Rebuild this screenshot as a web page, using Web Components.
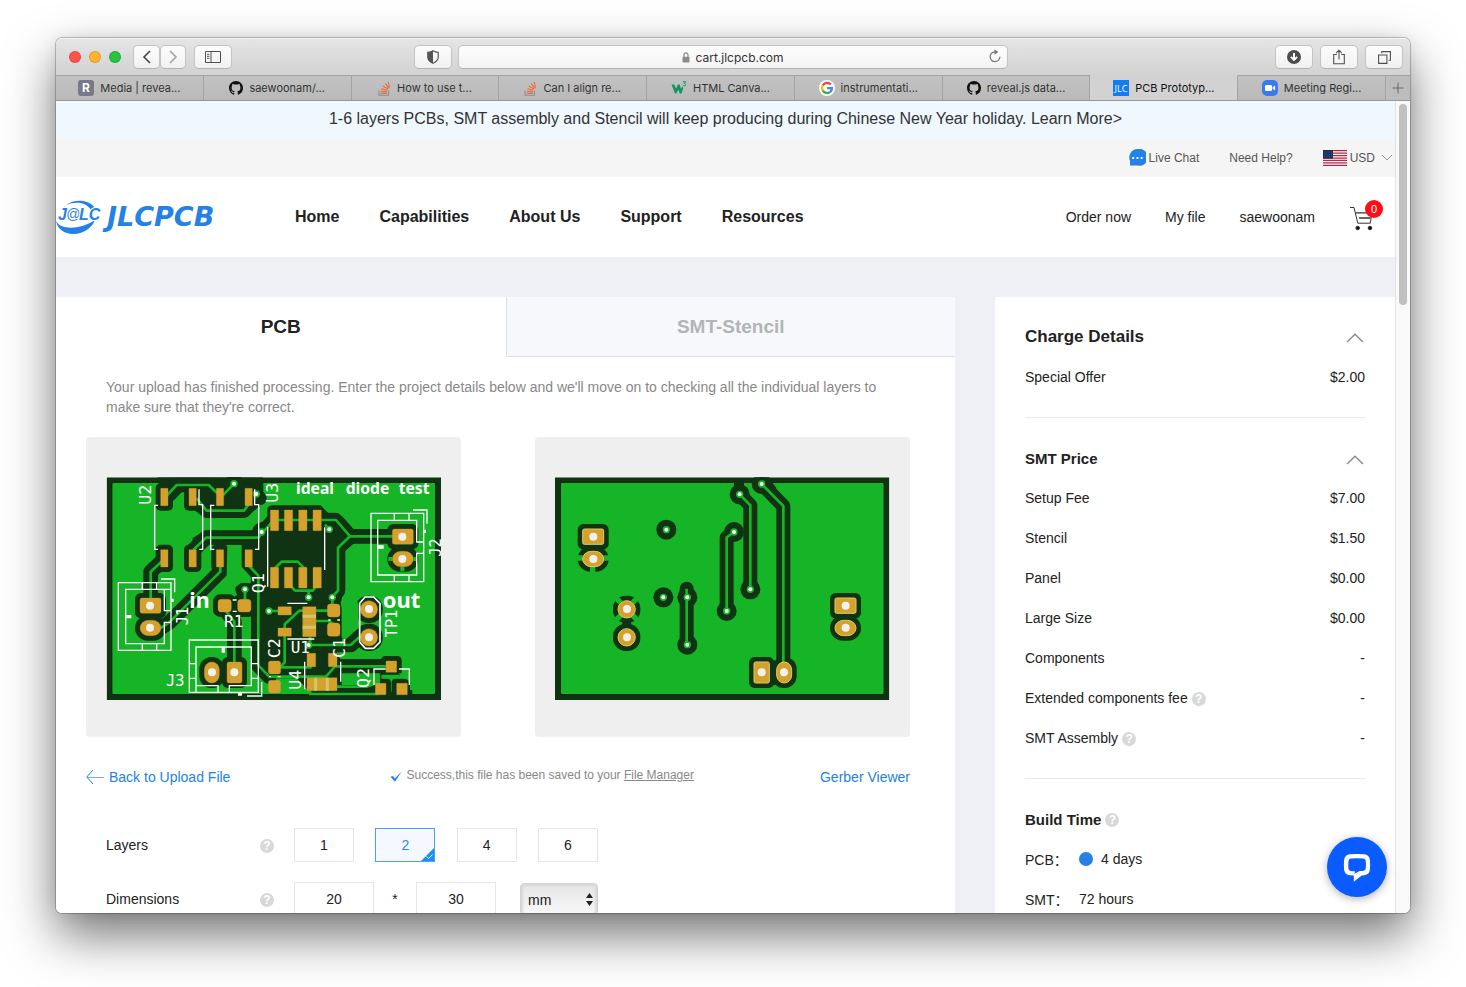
<!DOCTYPE html>
<html lang="en">
<head>
<meta charset="utf-8">
<title>PCB Prototype &amp; PCB Fabrication - JLCPCB</title>
<style>
  html, body { margin: 0; height: 100%; background: #fff; }
  body { font-family: "Liberation Sans", Arial, "Noto Sans CJK SC", sans-serif; font-size: 14px; color: #222; }
</style>
</head>
<body>
<app-desktop></app-desktop>
<script>
const BASE = `*{box-sizing:border-box} a{color:inherit;text-decoration:none} button{font:inherit;color:inherit;background:none;border:0;padding:0;margin:0} svg{display:block;flex:none}`;
function define(name, css, html, setup) {
  const t = document.createElement('template');
  customElements.define(name, class extends HTMLElement {
    constructor() {
      super();
      this.attachShadow({ mode: 'open' });
    }
    connectedCallback() {
      if (this.shadowRoot.childNodes.length) return;
      t.innerHTML = `<style>${BASE}${css}</style>${typeof html === 'function' ? html(this) : html}`;
      this.shadowRoot.append(t.content.cloneNode(true));
      if (setup) setup(this);
    }
  });
}

/* ---------- small icons ---------- */
const ICONS = {
  back: `<svg width="10" height="16" viewBox="0 0 10 16" fill="none" stroke="#444" stroke-width="1.6"><path d="M8 2 2 8l6 6"/></svg>`,
  forward: `<svg width="10" height="16" viewBox="0 0 10 16" fill="none" stroke="#a3a3a3" stroke-width="1.6"><path d="m2 2 6 6-6 6"/></svg>`,
  sidebar: `<svg width="16" height="12" viewBox="0 0 16 12" fill="none" stroke="#505050"><path d="M.5.5h15v11H.5zM6 .5v11M2 3.3h2.4M2 5.3h2.4M2 7.3h2.4"/></svg>`,
  shield: `<svg width="12" height="14" viewBox="0 0 12 14"><path d="M6 .7c1.5 1 3.3 1.5 5.2 1.6v5c0 2.700-2 4.700-5.200 6C2.800 12 .8 10 .8 7.300v-5C2.700 2.200 4.500 1.700 6 .7z" fill="none" stroke="#555" stroke-width="1.200"/><path d="M6 .7v12.600C2.800 12 .8 10 .8 7.300v-5C2.700 2.200 4.500 1.700 6 .7z" fill="#555"/></svg>`,
  lock: `<svg width="8" height="11" viewBox="0 0 8 11"><path d="M2 5V3a2 2.200 0 0 1 4 0v2" fill="none" stroke="#8b8b8b" stroke-width="1.200"/><rect x=".5" y="4.700" width="7" height="5.800" rx=".8" fill="#8b8b8b"/></svg>`,
  reload: `<svg width="12" height="14" viewBox="0 0 12 14"><path d="M7 3A4.900 4.900 0 1 0 10.900 7.800" fill="none" stroke="#777" stroke-width="1.200"/><path d="M5.500.3 9.300 3 5.500 5.800z" fill="#777"/></svg>`,
  download: `<svg width="14" height="14" viewBox="0 0 14 14"><circle cx="7" cy="7" r="7" fill="#4d4d4d"/><path d="M7 3v6.500M3.900 6.800 7 10l3.100-3.200" fill="none" stroke="#fff" stroke-width="1.900"/></svg>`,
  share: `<svg width="12" height="16" viewBox="0 0 12 16" fill="none" stroke="#505050" stroke-width="1.100"><path d="M3.800 5.500H.7v9.300h10.600V5.500H8.200M6 10.500V1.300M3.200 4 6 1.200 8.800 4"/></svg>`,
  overview: `<svg width="13" height="13" viewBox="0 0 13 13" fill="none" stroke="#505050" stroke-width="1.100"><path d="M.6 4h8.300v8.400H.6zM3.800 2.300V.6h8.600v8.600h-1.700"/></svg>`,
  R: `<svg width="16" height="16" viewBox="0 0 16 16"><rect width="16" height="16" rx="3" fill="#777986"/><text x="8" y="12.200" font-family="Inter,sans-serif" font-size="12" font-weight="700" fill="#fff" text-anchor="middle">R</text></svg>`,
  github: `<svg width="14" height="14" viewBox="0 0 16 16"><path fill="#111" d="M8 0C3.580 0 0 3.580 0 8c0 3.540 2.290 6.530 5.470 7.590.4.070.550-.170.550-.380 0-.190-.010-.820-.010-1.490-2.010.370-2.530-.490-2.690-.940-.090-.230-.480-.940-.820-1.130-.280-.150-.680-.520-.010-.530.630-.010 1.080.580 1.230.820.720 1.210 1.870.870 2.330.660.070-.520.280-.870.510-1.070-1.780-.200-3.640-.890-3.640-3.950 0-.870.310-1.590.820-2.150-.080-.200-.360-1.020.080-2.120 0 0 .670-.210 2.200.820.640-.180 1.320-.270 2-.270s1.360.090 2 .270c1.530-1.040 2.200-.820 2.200-.820.440 1.100.160 1.920.080 2.120.510.560.820 1.270.820 2.150 0 3.070-1.870 3.750-3.650 3.950.290.250.540.730.540 1.480 0 1.070-.010 1.930-.010 2.200 0 .210.150.460.550.380A8.010 8.010 0 0 0 16 8c0-4.420-3.580-8-8-8z"/></svg>`,
  so: `<svg width="13" height="15" viewBox="0 0 13 15" fill="none"><path d="M1 9.500v4.800h9.500V9.500" stroke="#8a8f94" stroke-width="1.100"/><path d="M2.700 12.400h6.200M2.800 10.200l6.100.7M3.400 7.700l5.800 1.700M4.800 5l5.200 3M7.300 2.700l3.700 4.600M10.300.800l1.100 5.700" stroke="#ee6c35" stroke-width="1.100"/></svg>`,
  w3: `<svg width="16" height="14" viewBox="0 0 16 14"><path d="M.5 3.500h2.800l1.700 4.200 1.900-4.200h1.800l1.200 4.200 1.300-2.200 1 1.700-1.600 5.200H8.900L7.200 8.700l-2 3.700H4z" fill="#12945f"/><path d="M12 .8h2.700L13.300 2.300c1.800.2 1.700 2.700 0 2.600-.7 0-1.200-.3-1.400-.8" fill="none" stroke="#12945f"/></svg>`,
  google: `<svg width="16" height="16" viewBox="0 0 16 16"><circle cx="8" cy="8" r="8" fill="#fff"/><g fill="none" stroke-width="2.300"><path d="M11.800 4.500A5 5 0 0 0 3.800 5.300" stroke="#ea4335"/><path d="M3.800 5.300a5 5 0 0 0 0 5.300" stroke="#fbbc05"/><path d="M3.800 10.600a5 5 0 0 0 7.500 1.300" stroke="#34a853"/><path d="M11.300 11.900A5 5 0 0 0 13 8.100H8.100" stroke="#4285f4"/></g></svg>`,
  jlc: `<svg width="16" height="16" viewBox="0 0 16 16"><rect width="16" height="16" fill="#137cf0"/><text x="8" y="12" text-anchor="middle" font-family="Open Sans,sans-serif" font-size="9" fill="#fff">JLC</text></svg>`,
  zoom: `<svg width="16" height="16" viewBox="0 0 16 16"><rect width="16" height="16" rx="5" fill="#3a7af0"/><rect x="3" y="5" width="7" height="6" rx="1.300" fill="#fff"/><path d="m10.500 7.500 2.600-2v5l-2.600-2z" fill="#fff"/></svg>`,
  livechat: `<svg width="17" height="17" viewBox="0 0 17 17"><path d="M8.500 0A8.500 8.500 0 1 1 8.500 16.600L1 16.600V12A8.500 8.500 0 0 1 8.500 0z" fill="#2681e6"/><path d="M3.200 8h1.900v1.900H3.200zM7.500 8h1.900v1.900H7.500zM11.700 8h1.900v1.900h-1.900z" fill="#fff"/></svg>`,
  flag: `<svg width="24" height="16" viewBox="0 0 24 16"><rect width="24" height="16" fill="#fff"/><path d="M0 .6h24M0 3.100h24M0 5.500h24M0 8h24M0 10.400h24M0 12.900h24M0 15.300h24" stroke="#b92240" stroke-width="1.250"/><rect width="10" height="8.600" fill="#1c2c5c"/><path d="M1 2h8M1 4.300h8M1 6.600h8" stroke="#71809e" stroke-width=".6" stroke-dasharray=".8 1"/></svg>`,
  down: `<svg width="12" height="7" viewBox="0 0 12 7" fill="none" stroke="#999"><path d="m1 1 5 5 5-5"/></svg>`,
  up: `<svg width="18" height="10" viewBox="0 0 18 10" fill="none" stroke="#8a8a8a" stroke-width="1.400"><path d="m1 9 8-7.700L17 9"/></svg>`,
  cart: `<svg width="26" height="25" viewBox="0 0 26 25" fill="none" stroke="#333"><path d="M1 1.500h4l3.800 15.700h12.500l1.700-11.400" /><path d="M6.800 6.800h16M10 12h11.500" stroke-width="1.300"/><circle cx="8.700" cy="22" r="1.800" fill="#111"/><circle cx="21" cy="22" r="1.800" fill="#111"/></svg>`,
  arrow: `<svg width="18" height="14" viewBox="0 0 18 14" fill="none" stroke="#2681e6"><path d="M7 0 .8 7 7 14" /><path d="M1 7.500h17" stroke-opacity=".65"/></svg>`,
  tick: `<svg width="12" height="11" viewBox="0 0 12 11"><path d="m.5 5.700 2.500-.7L4.800 7.500 11.700.500 5 10.700z" fill="#2681e6"/></svg>`,
  bubble: `<svg width="30" height="30" viewBox="0 0 30 30"><path fill="#fff" fill-rule="evenodd" d="M8 2.300q7-.7 14 0 5.500.5 5.900 5.700.5 4.900 0 9.500-.5 5-5.400 5.700l-2.800.3-7.900 6.200v-6.300l-3.800-.1q-5.300-.6-5.900-5.600-.5-4.900 0-9.700.5-5 5.900-5.700zM8.700 6.500q-2 .3-2.200 2.200-.5 4.200 0 8.300.2 1.700 2.200 2 1.500.200 4.300.2l-.4 2.500 5.100-2.600q2.300 0 3.900-.3 1.900-.3 2.100-2 .5-4.100 0-8.200-.2-1.800-2.200-2.100-6.400-.6-12.800 0z"/></svg>`
};
define('ui-icon', `:host{display:inline-flex;flex:none}`, el => ICONS[el.getAttribute('name')]);

define('help-icon', `:host{display:inline-flex;flex:none;padding-top:1px} button{width:14px;height:14px;border-radius:50%;background:#d8d8d8;color:#fff;font-size:12px;line-height:14px;font-weight:700;text-align:center}`,
  `<button type="button" aria-label="Help">?</button>`);

/* ---------- browser chrome ---------- */
define('tool-button', `:host{display:inline-flex} button{width:var(--w,38px);height:24px;display:grid;place-items:center;background:linear-gradient(#fdfdfd,#f1f1f1);border:1px solid #c3c3c3;border-bottom-color:#b2b2b2;border-radius:var(--r,5px)}`,
  el => `<button type="button" aria-label="${el.getAttribute('label')}"><slot></slot></button>`);

define('browser-toolbar', `
  :host{display:grid;grid-template-columns:1fr minmax(0,550px) 1fr;align-items:center;height:37px;background:linear-gradient(#e5e5e5,#d2d2d2);border-top:1px solid #f6f6f6}
  .lights{display:flex;gap:8px;margin-right:12px}
  .lights button{width:12px;height:12px;border-radius:50%;border:1px solid rgba(0,0,0,.12)}
  .group{display:flex;align-items:center}
  .left{padding-left:13px}
  .shield{margin-left:auto;margin-right:6px}
  .right{justify-content:flex-end;gap:7px;padding-right:7px}
  .url{display:grid;grid-template-columns:24px 1fr 24px;align-items:center;height:24px;background:linear-gradient(#fdfdfd,#f3f3f3);border:1px solid #c3c3c3;border-bottom-color:#b2b2b2;border-radius:5px;font:12px Inter,sans-serif;color:#333}
  .site{grid-column:2;display:flex;justify-content:center;align-items:center;gap:5px}
`, `<div class="group left">
    <div class="lights"><button type="button" aria-label="Close" style="background:#ff534d"></button><button type="button" aria-label="Minimise" style="background:#fdb32f"></button><button type="button" aria-label="Zoom" style="background:#28c33f"></button></div>
    <tool-button label="Back" style="--w:27px;--r:5px"><ui-icon name="back"></ui-icon></tool-button>
    <tool-button label="Forward" style="--w:26px;--r:5px"><ui-icon name="forward"></ui-icon></tool-button>
    <tool-button label="Sidebar" style="margin-left:8px"><ui-icon name="sidebar"></ui-icon></tool-button>
    <tool-button class="shield" label="Privacy report"><ui-icon name="shield"></ui-icon></tool-button>
  </div>
  <div class="url"><span class="site"><ui-icon name="lock"></ui-icon><span>cart.jlcpcb.com</span></span><button type="button" aria-label="Reload"><ui-icon name="reload"></ui-icon></button></div>
  <div class="group right">
    <tool-button label="Downloads"><ui-icon name="download"></ui-icon></tool-button>
    <tool-button label="Share"><ui-icon name="share"></ui-icon></tool-button>
    <tool-button label="Tab overview"><ui-icon name="overview"></ui-icon></tool-button>
  </div>`);

define('browser-tab', `
  :host{flex:1;min-width:0;background:linear-gradient(#c2c2c2,#b9b9b9);border-right:1px solid #a3a3a3;border-top:1px solid #a3a3a3;display:flex}
  :host([active]){background:#d2d2d2;border-top-color:#d2d2d2;color:#111}
  a{flex:1;display:flex;align-items:center;justify-content:center;gap:6px;white-space:nowrap}
`, el => `<a href="#"><ui-icon name="${el.getAttribute('icon')}"></ui-icon><span><slot></slot></span></a>`);

define('browser-tabs', `
  :host{display:flex;height:26px;background:#bdbdbd;border-bottom:1px solid #999;font:11px Inter,sans-serif;color:#333}
  .new{width:24px;border-top:1px solid #a3a3a3;display:grid;place-items:center}
`, `<browser-tab icon="R">Media | revea...</browser-tab><browser-tab icon="github">saewoonam/...</browser-tab><browser-tab icon="so">How to use t...</browser-tab><browser-tab icon="so">Can I align re...</browser-tab><browser-tab icon="w3">HTML Canva...</browser-tab><browser-tab icon="google">instrumentati...</browser-tab><browser-tab icon="github">reveal.js data...</browser-tab><browser-tab icon="jlc" active>PCB Prototyp...</browser-tab><browser-tab icon="zoom">Meeting Regi...</browser-tab>
  <button class="new" type="button" aria-label="New tab"><svg width="12" height="12" viewBox="0 0 12 12" stroke="#666"><path d="M6 .5v11M.5 6h11"/></svg></button>`);

/* ---------- site header ---------- */
define('site-logo', `:host{display:block}`, `<a href="#" aria-label="JLCPCB"><svg width="160" height="34" viewBox="0 0 160 34">
  <path d="M10 5C18-1 33-1 39 8l-4 2C30 2 20 1 10 5z" fill="#2681e6"/>
  <path d="M0 21c5 10 26 8 39-1-7 18-36 19-39 1z" fill="#2681e6"/>
  <g font-family="Liberation Sans,sans-serif" font-weight="700" font-style="italic" font-size="16" fill="#2681e6" stroke="#fff" stroke-width="2" paint-order="stroke"><text x="2" y="20">J</text><text x="10" y="19" font-size="14" font-weight="400">@</text><text x="23" y="20">LC</text></g>
  <text x="51" y="26" font-family="DejaVu Sans,sans-serif" font-weight="700" font-style="italic" font-size="27" fill="#2681e6">JLCPCB</text></svg></a>`);

define('site-header', `
  :host{display:block}
  .banner{height:37px;line-height:36px;background:#eff7ff;text-align:center;font-size:16px;color:#333;white-space:nowrap}
  .util{height:39px;background:#f5f5f5;display:flex;align-items:center;justify-content:flex-end;gap:30px;padding-right:2px;font-size:12px;color:#555}
  .util a,.util button{display:flex;align-items:center;gap:3px}
  .util ui-icon[name=down]{margin-left:3px}
  .bar{height:80px;background:#fff;display:flex;align-items:center;padding-right:20px}
  nav{display:flex;gap:40px;margin-left:79px;font-size:16px;font-weight:700;color:#222}
  .user{margin-left:auto;display:flex;align-items:center;gap:34px}
  .cart{position:relative;margin-top:6px}
  .count{position:absolute;left:16px;top:-6px;width:18px;height:18px;line-height:18px;border-radius:50%;background:#ff0d16;color:#fff;font-size:11px;text-align:center}
`, `<div class="banner"><a href="#">1-6 layers PCBs, SMT assembly and Stencil will keep producing during Chinese New Year holiday. Learn More&gt;</a></div>
  <div class="util"><a href="#"><ui-icon name="livechat"></ui-icon>Live Chat</a><a href="#">Need Help?</a><button type="button"><ui-icon name="flag"></ui-icon>USD<ui-icon name="down"></ui-icon></button></div>
  <div class="bar"><site-logo></site-logo>
    <nav><a href="#">Home</a><a href="#">Capabilities</a><a href="#">About Us</a><a href="#">Support</a><a href="#">Resources</a></nav>
    <div class="user"><a href="#">Order now</a><a href="#">My file</a><a href="#">saewoonam</a><a class="cart" href="#" aria-label="Cart"><ui-icon name="cart"></ui-icon><span class="count">0</span></a></div>
  </div>`);

/* ---------- board renderings ---------- */
const DARK = '#0f3313', GREEN = '#16b527', GOLD = '#d6a02c', HOLE = '#f2f1ef';
const r = (x, y, w, h, rx = 1) => ({ x, y, w, h, rx });
const rects = (list, grow, fill, extra = 0) => list.map(p => `<rect x="${p.x - grow}" y="${p.y - grow}" width="${p.w + 2 * grow}" height="${p.h + 2 * grow}" rx="${p.rx + extra}" fill="${fill}"/>`).join('');
const dots = (list, rad, fill) => list.map(([x, y]) => `<circle cx="${x}" cy="${y}" r="${rad}" fill="${fill}"/>`).join('');

const top_ = {
  pads: [r(242,175,22,52), r(327,175,22,52), r(409,175,22,52), r(495,175,22,52), r(242,359,22,52), r(327,359,22,52), r(409,359,22,52), r(495,359,22,52)],
  inner: [r(571,240,25,62), r(613,240,25,62), r(656,240,25,62), r(699,240,25,62), r(571,412,25,62), r(613,412,25,62), r(656,412,25,62), r(699,412,25,62),
    r(594,530,40,25), r(594,594,40,25), r(668,530,40,90), r(742,522,38,39,9), r(742,579,38,40,9), r(565,693,37,39,7), r(565,751,37,38,7), r(681,670,26,40), r(745,670,26,40), r(681,743,90,39)],
  round: [r(180,504,63,46,6), r(180,571,63,46,26), r(414,508,40,38,10), r(473,508,40,38,10), r(937,297,63,46,6), r(937,364,63,46,26), r(841,512,52,52,26), r(841,596,52,52,26), r(373,696,45,63,24), r(441,696,45,63,6), r(918,693,32,34), r(886,760,32,34), r(950,760,32,34)],
  holes: [[210,527],[210,593],[967,320],[967,387],[867,537],[867,622],[396,727],[463,727]],
  vias: [[462,161],[529,192],[545,306],[748,298],[686,502],[757,502],[495,478],[567,543],[686,645]],
  tracks: 'M262 195 290 165H386L412 190M425 200 462 161M350 205 380 242H492L505 225M340 360 378 323H535L580 272M724 270H768L810 319H967M810 319 774 353V482L757 500M250 390 212 425V520M421 400V425L268 577 245 592H210M505 395V405L535 437V706L568 740M495 478V520M435 540 463 575V720M690 645H812L845 615M765 709H935',
  innerTracks: 'M585 270H720M735 284 748 298M585 425V414L605 395H653L672 414V430M625 460 645 482H698L712 466M686 482V502M757 500V535M567 543H610M614 598V583L658 542H755M690 573H745L765 585M614 610V697L600 712H692V700M565 740H738L765 709M690 620V645M590 770H660M690 780V792H895M770 770H860L882 762'
};
const topBoard = `
  <clipPath id="edge"><rect x="80" y="142" width="1003" height="668"/></clipPath><g clip-path="url(#edge)">
  <rect x="80" y="142" width="1003" height="668" fill="${DARK}"/><rect x="97" y="159" width="968" height="633" rx="4" fill="${GREEN}"/>
  <path d="M97 157H1065M95 159V792M97 794H1065M1067 159V792" stroke="#0a240c" stroke-width="2"/>
  <g fill="${DARK}"><path d="M232 142H548L556 190 545 222 500 262H372L326 228V186H306L280 212 240 180z"/>
  <path d="M540 285 562 265V235Q565 226 580 226H722L745 250H770L822 300V340L795 362V485L780 510 785 535V640L770 668 783 690H905V785H980V792H695L650 745H560L515 708V420L488 408V350L540 340z"/>
  <path d="M338 350V324L375 302H530L545 275V350H470L455 345H385L350 380z"/></g>
  <path d="M${top_.tracks.slice(1)}" fill="none" stroke="${DARK}" stroke-width="44" stroke-linejoin="round" stroke-linecap="round"/>
  ${rects(top_.pads, 15, DARK, 14)}${rects(top_.round, 15, DARK, 12)}${dots(top_.vias, 29, DARK)}
  <g fill="${GREEN}"><path d="M442 345H485V410L512 440V460H482L455 480 440 440zM780 648 812 612 835 595V520L795 480V605zM785 730H900V765H785zM955 730H1055V780H990V755zM604 762H668V788H612z"/><path d="M550 159H1065V240H830V297L772 247H745L730 224H585L550 200z"/></g>
  <path d="M495 478 495 520M529 192 540 205" stroke="${DARK}" stroke-width="40" stroke-linecap="round"/>
  <path d="M${top_.tracks.slice(1)}${top_.innerTracks}" fill="none" stroke="${GREEN}" stroke-width="8" stroke-linejoin="round"/>
  <path d="M925 387H937M1000 387H1012M967 410V424M905 740H1000" stroke="${GREEN}" stroke-width="12"/>
  ${dots(top_.vias, 11, GREEN)}${dots(top_.vias, 6, '#fff')}
  <g stroke="#b59a3c" stroke-width="1">${rects([...top_.pads, ...top_.inner, ...top_.round], 0, GOLD)}</g>
  <path d="M668 559H708M668 592H708M707 743V782M742 743V782" stroke="#d1c66c" stroke-width="9"/>${dots(top_.holes, 12, HOLE)}
  </g>
  <g fill="none" stroke="#fff" stroke-width="4">
    <path d="M234 226H224V358H234M357 178V224H368V358H358M403 226H392V358H403M524 178V224H536V358H525M563 292V470M734 292V420"/>
    <path d="M115 458H273V661H115zM273 478H137V641H253V577H273M187 458V478M230 458V478M187 641V661M230 641V661M243 447H284V487M253 478V542H273"/>
    <path d="M873 250H1031V455H873zM1031 336H1010V271H893V435H1010V370H1031M943 250V271M987 250V271M943 435V455M987 435V455M999 240H1041V281"/>
    <path d="M328 630H535V787H328zM348 787V651H514V767H448V787M414 787V767H348M328 701H348M328 745H348M514 701H535M514 745H535M545 756V798H501"/>
    <path d="M622 520H682M622 627H703M458 510H470M458 544H470M745 570H752M772 570H780M567 740H573M593 740H602M674 695V778M782 695V755M882 765V717H917M957 717H988V765"/>
    <path d="M855 501H881L900 520V636L881 655H856L839 636V520z" stroke-width="5"/>
  </g>
  <path d="M137 560H154M893 351H911M430 651V668M273 511H281M1031 304H1038M474 792H486" stroke="#fff" stroke-width="10"/>
  <g fill="#fff" font-family="DejaVu Sans Mono,monospace" font-size="44">
    <g font-weight="700" font-family="Noto Sans,sans-serif"><text x="648" y="192" font-size="47">ideal</text><text x="797" y="192" font-size="47">diode</text><text x="956" y="192" font-size="47">test</text><text x="328" y="534" font-size="64">in</text><text x="908" y="534" font-size="66">out</text></g>
    <text x="432" y="591" font-size="48">R1</text><text x="632" y="668" font-size="48">U1</text><text x="258" y="769" font-size="46">J3</text>
    <text transform="translate(212 224) rotate(-90)" font-size="50">U2</text><text transform="translate(593 218) rotate(-90)" font-size="50">U3</text>
    <text transform="translate(551 490) rotate(-90)" font-size="50">Q1</text><text transform="translate(325 586) rotate(-90)" font-size="46">J1</text>
    <text transform="translate(1082 380) rotate(-90)" font-size="46">J2</text><text transform="translate(952 622) rotate(-90)" font-size="46">TP1</text>
    <text transform="translate(599 685) rotate(-90)" font-size="50">C2</text><text transform="translate(795 684) rotate(-90)" font-size="50">C1</text>
    <text transform="translate(664 779) rotate(-90)" font-size="50">U4</text><text transform="translate(868 774) rotate(-90)" font-size="50">Q2</text>
  </g>`;

const bot = {
  pads: [r(158,297,63,46,5), r(915,504,63,46,5), r(672,696,46,63,5)],
  ovals: [r(158,364,63,46,26), r(915,571,63,46,26), r(740,696,45,63,24), r(264,512,52,52,26), r(264,596,52,52,26)],
  holes: [[190,320],[190,387],[947,527],[947,593],[695,727],[762,727],[291,537],[291,622]],
  vias: [[629,193],[695,162],[409,299],[612,306],[400,502],[472,502],[661,478],[590,543],[472,644]],
  tracks: 'M629 193 661 226V478M695 162 760 228V710M612 306 590 322V543M470 476V644'
};
const bottomBoard = `
  <clipPath id="edge"><rect x="75" y="142" width="1003" height="668"/></clipPath><g clip-path="url(#edge)">
  <rect x="75" y="142" width="1003" height="668" fill="${DARK}"/><rect x="93" y="159" width="968" height="633" rx="4" fill="${GREEN}"/>
  <path d="M93 157H1061M91 159V792M93 794H1061M1063 159V792" stroke="#0a240c" stroke-width="2"/>
  <path d="M612 155H642V195H612zM668 155H725L740 175H690zM165 335H215V375H165zM920 535H975V590H920zM718 705 735 690V765H718zM277 570H303V600H277z" fill="${DARK}"/>
  <path d="${bot.tracks}" fill="none" stroke="${DARK}" stroke-width="42" stroke-linecap="round" stroke-linejoin="round"/>
  ${rects([...bot.pads, ...bot.ovals], 15, DARK, 12)}${dots(bot.vias, 30, DARK)}
  <path d="M140 384H158M221 384H238M188 410V428M258 504 272 518M322 504 308 518M258 570 272 556M322 570 308 556" stroke="${GREEN}" stroke-width="16"/>
  <path d="${bot.tracks}" fill="none" stroke="${GREEN}" stroke-width="8"/>
  ${dots(bot.vias, 11, GREEN)}${dots(bot.vias, 6, '#fff')}
  <g stroke="#d5cf69" stroke-width="3">${rects([...bot.pads, ...bot.ovals], 0, GOLD)}</g>${dots(bot.holes, 12, HOLE)}</g>`;

define('board-view', `:host{display:block;flex:0 1 375px} svg{width:100%;height:auto;background:#efefef;border-radius:4px}`,
  el => el.getAttribute('side') === 'top'
    ? `<svg viewBox="18 21 1125 900" role="img" aria-label="Top side">${topBoard}</svg>`
    : `<svg viewBox="15 21 1125 900" role="img" aria-label="Bottom side">${bottomBoard}</svg>`);

/* ---------- order form ---------- */
define('form-row', `
  :host{display:grid;grid-template-columns:154px 34px 304px;align-items:center;height:34px;margin-bottom:20px}
`, `<slot name="label"></slot><help-icon></help-icon><slot></slot>`);

define('layer-picker', `
  :host{display:flex;justify-content:space-between}
  label{position:relative;width:60px;height:34px;line-height:32px;border:1px solid #e6e6e6;text-align:center;background:#fff}
  input{appearance:none;position:absolute;inset:0;margin:0}
  label:has(:checked){border-color:#4a9ff5;background:#f5f9ff;color:#1890ff}
  svg{position:absolute;right:0;bottom:0;display:none}
  label:has(:checked) svg{display:block}
`, [1, 2, 4, 6].map(n => `<label><input type="radio" name="layers" value="${n}"${n === 2 ? ' checked' : ''}>${n}<svg width="13" height="13" viewBox="0 0 13 13"><path d="M13 0v13H0z" fill="#1890ff"/><path d="m5.500 8.500 2 2 4-4" fill="none" stroke="#fff"/></svg></label>`).join(''));

define('size-fields', `
  :host{display:grid;grid-template-columns:80px 42px 80px 24px 78px;text-align:center;align-items:center}
  input{width:100%;height:34px;border:1px solid #e6e6e6;text-align:center;font:inherit;color:#222;padding:0;background:#fff}
  .unit{grid-column:5;position:relative}
  select{display:block;appearance:none;width:100%;height:32px;border:1px solid #d3d3d3;border-radius:4px;box-shadow:inset 2px 2px 2px #d9d9d9,inset -2px 0 2px #d9d9d9;background:linear-gradient(#e5e5e5,#f8f8f8);font:inherit;color:#222;padding:1px 7px 0}
  svg{position:absolute;right:5px;top:10px;pointer-events:none}
`, `<input aria-label="Width" value="20"><span>*</span><input aria-label="Height" value="30">
  <div class="unit"><select aria-label="Unit"><option>mm</option><option>inch</option></select><svg width="7" height="13" viewBox="0 0 7 13"><path d="M3.500 0 7 5H0zM0 8h7l-3.500 5z" fill="#222"/></svg></div>`);

define('order-panel', `
  :host{display:block;background:#fff;flex:1;min-width:0}
  .tabs{display:grid;grid-template-columns:1fr 1fr;height:60px;font-size:19px;font-weight:700}
  .tabs button{color:#222}
  .tabs button+button{background:#f7f8fb;color:#b2b4b8;border-left:1px solid #d8e0e8;border-bottom:1px solid #d8e0e8}
  p{margin:20px 50px;line-height:20px;color:#888;}
  .boards,.links{display:flex;justify-content:space-between;margin:0 45px 0 30px}
  .links{align-items:center;height:20px;margin-top:30px;margin-bottom:41px;color:#2681e6}
  .links>*{display:flex;align-items:center;gap:5px}
  .links .saved{font-size:12px;color:#888;gap:4px;margin-bottom:4px;padding-left:34px}
  .saved a{text-decoration:underline}
  .saved ui-icon{padding-top:2px}
  form{margin:0 50px}
`, `<div class="tabs" role="tablist"><button type="button" role="tab">PCB</button><button type="button" role="tab">SMT-Stencil</button></div>
  <p>Your upload has finished processing. Enter the project details below and we'll move on to checking all the individual layers to make sure that they're correct.</p>
  <div class="boards"><board-view side="top"></board-view><board-view side="bottom"></board-view></div>
  <div class="links"><a href="#"><ui-icon name="arrow"></ui-icon>Back to Upload File</a>
    <span class="saved"><ui-icon name="tick"></ui-icon><span>Success,this file has been saved to your <a href="#">File Manager</a></span></span>
    <a href="#">Gerber Viewer</a></div>
  <form><form-row><span slot="label">Layers</span><layer-picker></layer-picker></form-row><form-row><span slot="label">Dimensions</span><size-fields></size-fields></form-row></form>`);

/* ---------- charges ---------- */
define('charge-row', `:host{display:flex;align-items:center;gap:4px;height:40px} .value{margin-left:auto}`,
  el => `<span><slot></slot></span>${el.hasAttribute('help') ? '<help-icon></help-icon>' : ''}<span class="value">${el.getAttribute('value')}</span>`);
define('charge-title', `:host{display:flex;align-items:center;height:40px;font-size:15px;font-weight:700;gap:4px} :host([main]){font-size:17px} button{margin-left:auto;margin-right:1px;padding-top:2px}`,
  el => `<span><slot></slot></span>${el.hasAttribute('help') ? '<help-icon></help-icon>' : '<button type="button" aria-label="Collapse"><ui-icon name="up"></ui-icon></button>'}`);
define('time-row', `:host{display:grid;grid-template-columns:54px 1fr;align-items:center;height:40px} .v{display:flex;align-items:center;gap:8px} :host([dot]) .v::before{content:"";width:14px;height:14px;border-radius:50%;background:#2681e6}`,
  el => `<span>${el.getAttribute('name')}</span><span class="v"><slot></slot></span>`);
define('charge-panel', `
  :host{display:block;flex:0 0 400px;background:#fff;padding:20px 30px 0}
  section{padding-bottom:20px;margin-bottom:20px;border-bottom:1px solid #ebebeb}
  section:last-child{border:0}
`, `<section><charge-title main>Charge Details</charge-title><charge-row value="$2.00">Special Offer</charge-row></section>
  <section><charge-title>SMT Price</charge-title><charge-row value="$7.00">Setup Fee</charge-row><charge-row value="$1.50">Stencil</charge-row><charge-row value="$0.00">Panel</charge-row><charge-row value="$0.00">Large Size</charge-row><charge-row value="-">Components</charge-row><charge-row value="-" help>Extended components fee</charge-row><charge-row value="-" help>SMT Assembly</charge-row></section>
  <section><charge-title help>Build Time</charge-title><time-row name="PCB：" dot>4 days</time-row><time-row name="SMT：">72 hours</time-row></section>`);

/* ---------- window ---------- */
define('browser-window', `
  :host{display:flex;flex-direction:column;flex:1;min-height:0;position:relative;border-radius:6px;overflow:hidden;background:#fff;box-shadow:0 0 0 1px rgba(0,0,0,.22),0 22px 50px rgba(0,0,0,.55),0 0 14px rgba(0,0,0,.08)}
  .view{flex:1;min-height:0;display:flex}
  .page{flex:1;min-width:0;overflow:hidden;background:#eef0f5}
  main{display:flex;gap:40px;padding-top:40px}
  .track{width:15px;flex:none;background:#f9f9f9;border-left:1px solid #e3e3e3;padding:3px}
  .thumb{height:201px;width:8px;border-radius:4px;background:#c1c1c1}
  .chat{position:absolute;right:23px;bottom:16px;width:60px;height:60px;border-radius:50%;background:#0a5cff;display:grid;place-items:center;box-shadow:0 2px 8px rgba(0,0,0,.3)}
`, `<browser-toolbar></browser-toolbar><browser-tabs></browser-tabs>
  <div class="view"><div class="page"><site-header></site-header><main><order-panel></order-panel><charge-panel></charge-panel></main></div><div class="track"><div class="thumb"></div></div></div>
  <button class="chat" type="button" aria-label="Open chat"><ui-icon name="bubble"></ui-icon></button>`);

define('app-desktop', `:host{display:flex;height:100vh;padding:38px 56px 74px;box-sizing:border-box;overflow:hidden}`, `<browser-window></browser-window>`);
</script>
</body>
</html>
